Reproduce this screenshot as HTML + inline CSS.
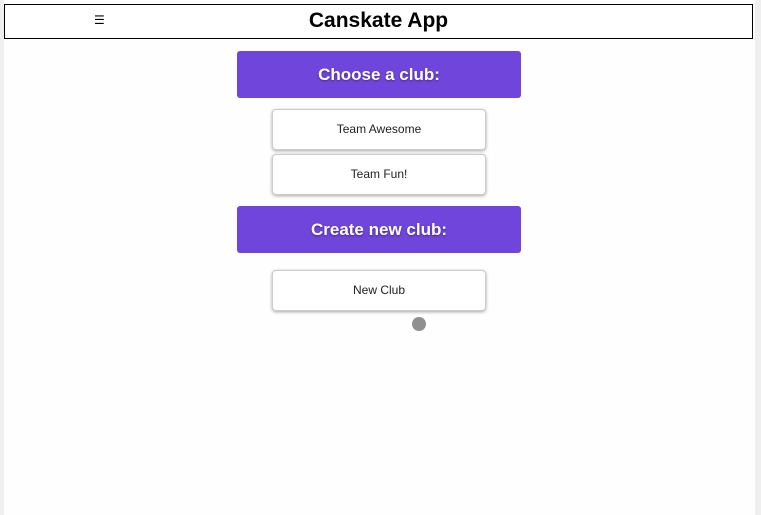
<!DOCTYPE html>
<html><head><style>
body{margin:0;width:761px;height:515px;background:#efefef;font-family:"Liberation Sans",sans-serif;position:relative;overflow:hidden}
.main{position:absolute;left:4px;top:0;width:751px;height:515px;background:#fefefe}
.hdr{position:absolute;left:4px;top:4px;width:747px;height:33px;border:1px solid #000;background:#fff}
.hdr .t{position:absolute;left:0;right:0;top:4px;text-align:center;font-weight:bold;font-size:21px;color:#000}
.hdr .m{position:absolute;left:89px;top:8px;font-size:12px}
.p{position:absolute;left:237px;width:284px;background:#7045dc;border-radius:3px;color:#fff;font-weight:bold;font-size:17px;text-align:center;text-shadow:0 1px 2px rgba(0,0,0,.4)}
.b{position:absolute;left:272px;width:212px;height:39px;border:1px solid #ccc;border-radius:4px;background:#fff;box-shadow:0 1px 3px rgba(0,0,0,.35);font-size:12px;color:#222;text-align:center;line-height:39px}
.dot{position:absolute;left:412px;top:317px;width:14px;height:14px;border-radius:50%;background:#8f8f8f}
</style></head><body>
<div class="main"></div>
<div class="hdr"><span class="m">☰</span><div class="t">Canskate App</div></div>
<div class="p" style="top:51px;height:47px;line-height:47px">Choose a club:</div>
<div class="b" style="top:109px">Team Awesome</div>
<div class="b" style="top:154px">Team Fun!</div>
<div class="p" style="top:206px;height:47px;line-height:47px">Create new club:</div>
<div class="b" style="top:270px">New Club</div>
<div class="dot"></div>
</body></html>
